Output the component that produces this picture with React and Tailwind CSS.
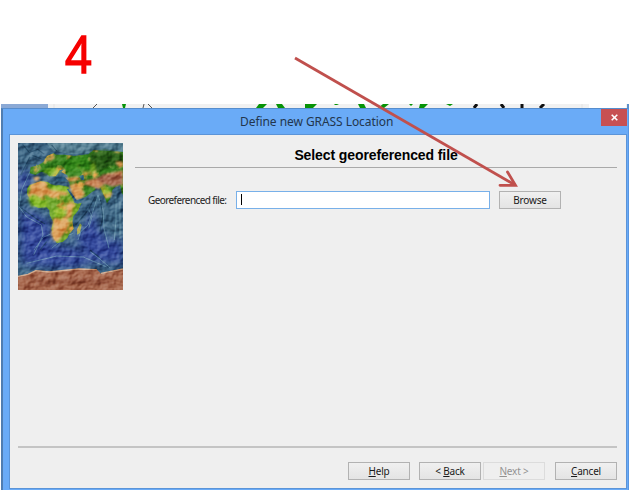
import React from "react";

const GREEN = "#079307";

function BackgroundStrip() {
  return (
    <svg className="block h-1 w-[628px]" viewBox="1 104 628 4" fill="none">
      <rect x="1" y="104" width="628" height="4" fill="#f1f1f1" />
      <rect x="1" y="104" width="47" height="4" fill="#8ba9d5" />
      <path d="M54 104v4M582 104v4" stroke="#e3e3e3" />
      <path d="M97 104l-4 4M148 104l4 4M144 104l-1 4" stroke="#555" />
      <path d="M122 104h4l-1 4h-2z" fill={GREEN} />
      <path d="M259 104h8l-4 4h-7zM276 104h6l3 4h-7zM305 104h12l-4 4h-8zM358 104h6l2 4h-6zM383 104h6l-5 4h-6zM334 104h5l-2 1h-2zM409 104h4l-2 2zM420 104h8l-4 4h-5zM446 104h7l-3 2z" fill={GREEN} />
      <path d="M477 104l-3 4M501 104l3 4M522 104v4M544 104l-4 4" stroke="#111" strokeWidth="3" />
      <rect x="589" y="104" width="37" height="4" fill="#fff" />
      <rect x="627" y="104" width="2" height="4" fill="#5d91cb" />
    </svg>
  );
}

function WorldMap() {
  return (
    <svg className="block h-[147px] w-[105px] shrink-0" viewBox="24 24 315 441" preserveAspectRatio="none">
      <defs>
        <filter id="relief" x="0" y="0" width="100%" height="100%" colorInterpolationFilters="sRGB">
          <feTurbulence type="fractalNoise" baseFrequency="0.03 0.035" numOctaves="3" seed="8" result="n" />
          <feDiffuseLighting in="n" surfaceScale="8" diffuseConstant="0.85" lightingColor="#fff" result="l">
            <feDistantLight azimuth="225" elevation="36" />
          </feDiffuseLighting>
          <feBlend in="l" in2="SourceGraphic" mode="soft-light" />
        </filter>
        <filter id="tint" x="0" y="0" width="100%" height="100%" colorInterpolationFilters="sRGB">
          <feTurbulence type="fractalNoise" baseFrequency="0.03" numOctaves="3" seed="4" />
          <feColorMatrix values="0 0 0 0 .9  0 0 0 0 .65  0 0 0 0 .3  4 0 0 0 -2.1" />
          <feComposite in2="SourceGraphic" operator="in" result="t" />
          <feMerge><feMergeNode in="SourceGraphic" /><feMergeNode in="t" /></feMerge>
        </filter>
        <filter id="soft"><feGaussianBlur stdDeviation="12" /></filter>
        <filter id="blend"><feGaussianBlur stdDeviation="2.5" /></filter>
      </defs>
      <g filter="url(#relief)">
        <rect x="24" y="24" width="315" height="441" fill="#3f6886" />
        <g fill="#3446a2" opacity=".85" filter="url(#soft)">
          <path d="M24 115l35-10 5 45-25 25-15 5zM30 225l40 5 50 35 5 40-40 55-55-5z" />
          <path d="M85 240l30 20 5 55-15 10zM195 310l35-50 20-40 15 60 35 40 39-10v80l-90-10zM35 350l80-25 90 15 50 40-70 20-150-10z" />
        </g>
        <path d="M110 24h229v36l-50-15-45 8-55 5-60-10z" fill="#557f92" />
        <g fill="none" stroke="#78a8b8" strokeWidth="3" opacity=".6">
          <path d="M60 110L35 165l-8 50 22 30 45 25 5 30-28 60M72 345l28-38 22-10M125 340l45-38 20-7M50 385l90-22 80 3 70 30" />
          <path d="M264 180l-14 45-16 45-22 20-8 25M264 180l15 45 3 55 15 60M318 185v70l-5 60M234 220l12 25-10 35M240 350l25 18 35 30M330 200v110" />
        </g>
        <g fill="none" stroke="#183d5b" strokeWidth="3.5" opacity=".65">
          <path d="M38 28l20 25 25-10 20 15M60 65L32 120M65 60l30 12M125 30l15 18M255 185l-20 40-38 45M35 220l45 32 25 15M272 195l6 50-8 45M110 320l-20 25M240 345l30 23" />
        </g>
        <g filter="url(#tint)">
          <path d="M104 80l12-13 25-8 24 0 28 4 42-5 15-12 89 5v75l5 60-9-12-5-25-15 8-8 8-6 25-10 15-10-25-8-20-19-8 3 12-12 8-18 14-22 5-21-30-9-25-3-15-18-10 8-9-13 4-12 18-20 0-7-10-16-4-18 10-17-6 3-18 18-4 16-8 12-10z" fill="#36801f" />
          <path d="M67 148l24-9 22 2 10 7 15 4 8-2 29 5 10 26 8 22 10 3 12-3-11 24-14 17-3 17 4 20-14 17-5 11-14 12-18 3-8-14-8-29 6-20-11-21-1-14-9-10-24 3-12-6-11-16-11-20 1-17 7-10z" fill="#6ea52b" />
          <path d="M210 265l5 5-5 24-9 5 1-17z" fill="#97a84a" />
          <path d="M78 88l8 8 2 12-9-2zM103 75l8-12 20-8 9 5-19 15-15 8z" fill="#4b9740" />
        </g>
        <g filter="url(#blend)">
          <path d="M240 55l43-9 31 5 25 5v35l-43 2-35 15-15 2z" fill="#285a15" />
          <path d="M165 75l65-15 15 30-8 22-32-5-40-2z" fill="#338a1d" opacity=".8" />
          <g fill="#dca15c">
            <path d="M67 147l25-7 20 4-2 12 17 10 34-1 15 10-11 8-13-5-19 12-26-10-13 9-22-10-20 5zM129 252l19-10 25 3 5 23-16 28-15 20-14 3-10-23 5-20zM171 207l17-4 6 15-12 32-14-5z" />
            <path d="M178 150l18-6 30 32-10 14-21 5-11-23zM106 78l20-16 12 3-15 12zM68 128l18-4 4 10-13 4zM162 130l40-6 10 10-30 7z" />
            <path d="M220 148l10-12 32-8 18-7 22-8 37-7v32l-25 8-30 2-18 14z" fill="#c98659" />
            <path d="M318 80h21v14l-12 5zM282 177l15-9 10 5-5 13-14 2z" />
          </g>
          <path d="M257 132l25-15 57 2v29l-32 7-30-10z" fill="#a6664d" />
          <g fill="#92c32b">
            <path d="M53 190l24-10 17 12 18 5-4 22-24-5-20 1zM132 222l26-5 8 18-10 20-22-7zM188 215l15 0-10 20-9 5zM115 156l18-4 39 7-2 13-25-3-17-4z" opacity=".75" />
            <path d="M98 105l32-10 24 15-23 12-27-4zM270 155l20 0 13 13-7 12-19-4zM240 92l13-12 4 25-10 12z" opacity=".65" />
          </g>
        </g>
        <path d="M175 161l25 35 25-7-6 6-21 9-27-41zM135 125l28 1 11 11-28 2z" fill="#2c5d80" />
        <path d="M208 123l12-4 3 16-9 1z" fill="#3d7990" />
        <path d="M24 425l30-7 25-12 38 3 30-2 33-1 25-5 55 2 13 13 66-13v62H24z" fill="#a7684e" />
        <path d="M24 424l30-6 23-11 40 4 30-3 58-6 55 2M273 415l66-13" fill="none" stroke="#d2a98b" strokeWidth="4" />
        <path d="M60 430l65 5 100-8 90 12-30 10-100-4-90 8z" fill="#8b4a35" opacity=".6" filter="url(#blend)" />
      </g>
    </svg>
  );
}

function Button({ children, disabled, className = "" }) {
  return (
    <button
      className={`flex h-[18px] w-[62px] shrink-0 items-center justify-center border text-[10px] leading-none tracking-[-0.2px] ${
        disabled ? "border-[#dcdcdc] bg-[#efefef] text-[#929292]" : "border-[#b2b2b2] bg-linear-to-b from-[#f0f0f0] to-[#e4e4e4] text-[#191919]"
      } ${className}`}
    >
      <span>{children}</span>
    </button>
  );
}

export default function App() {
  return (
    <div className="relative h-[491px] w-[630px] overflow-hidden bg-white font-['Noto_Sans','Open_Sans',sans-serif]">
      <div className="h-[104px] pt-[22px] pl-[65px]">
        <div className="w-fit origin-left scale-x-[0.91] text-[51px] leading-[62px] text-[#f60000] [-webkit-text-stroke:1.5px_#f60000] font-['Open_Sans',sans-serif]">4</div>
      </div>
      <div className="ml-px w-[628px]">
        <BackgroundStrip />
        <div className="flex h-[382px] flex-col border-t border-r border-l-2 border-t-[#568dcd] border-r-[#5796e3] border-l-[#507db1] bg-[#6aabf7] pr-px pb-px pl-[6px]">
          <header className="flex h-[25px] shrink-0 items-start">
            <h1 className="flex-1 pt-[4px] pl-[231px] text-[12px] leading-[17px] tracking-[-0.06px] text-[#23364d] whitespace-nowrap">Define new GRASS Location</h1>
            <button className="flex h-[17px] w-[26px] items-center justify-center bg-[#c75052]" aria-label="Close">
              <svg className="size-[7px]" viewBox="0 0 7 7" stroke="#fff" strokeWidth="1.6"><path d="M.7.7l5.6 5.6M6.3.7L.7 6.3" /></svg>
            </button>
          </header>
          <main className="flex min-h-0 flex-1 flex-col border border-[#5b94d8] bg-[#efefef] pr-[9px] pl-2">
            <div className="flex h-[311px] pt-2">
              <WorldMap />
              <section className="ml-[12px] flex-1">
                <h2 className="h-[25px] border-b border-[#a9a9a9] pt-[3px] text-center font-['Liberation_Sans',sans-serif] text-[14px] leading-[18px] font-bold tracking-[-0.1px] text-black">Select georeferenced file</h2>
                <div className="mt-[23px] flex items-center pl-[13px]">
                  <label className="w-[88px] shrink-0 text-[10px] leading-[18px] tracking-[-0.59px] text-[#222] whitespace-nowrap">Georeferenced file:</label>
                  <div className="flex h-[18px] w-[254px] items-center border border-[#78b0e9] bg-white pl-1">
                    <span className="mb-[2px] h-[11px] w-px bg-black" />
                  </div>
                  <Button className="ml-[9px]">Browse</Button>
                </div>
              </section>
            </div>
            <footer className="flex justify-end border-t-2 border-[#c4c4c4] pt-[14px]">
              <Button className="mr-[9px]"><u>H</u>elp</Button>
              <Button className="mr-[2px]">&lt; <u>B</u>ack</Button>
              <Button disabled className="mr-[10px]"><u>N</u>ext &gt;</Button>
              <Button><u>C</u>ancel</Button>
            </footer>
          </main>
        </div>
      </div>
      <svg className="pointer-events-none absolute inset-0 h-[491px] w-[630px]" fill="none" stroke="#c0504d" strokeWidth="2.8">
        <path d="M295 58L515 185" />
        <path d="M507.5 172L515.5 185.3L500 185.3" strokeLinecap="round" />
      </svg>
    </div>
  );
}
